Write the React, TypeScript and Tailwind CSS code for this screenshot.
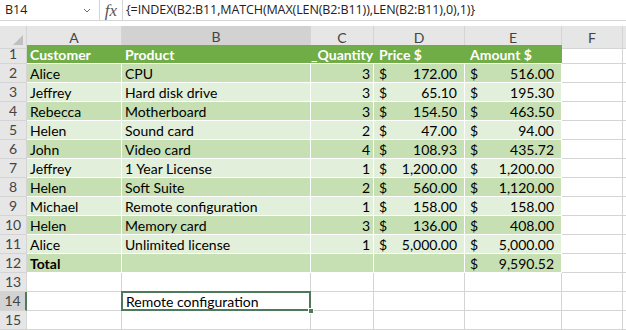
import React from "react";

type Row = {
  n: number;
  a?: string;
  b?: string;
  c?: string;
  d?: string;
  e?: string;
};

const rows: Row[] = [
  { n: 2, a: "Alice", b: "CPU", c: "3", d: "172.00", e: "516.00" },
  { n: 3, a: "Jeffrey", b: "Hard disk drive", c: "3", d: "65.10", e: "195.30" },
  { n: 4, a: "Rebecca", b: "Motherboard", c: "3", d: "154.50", e: "463.50" },
  { n: 5, a: "Helen", b: "Sound card", c: "2", d: "47.00", e: "94.00" },
  { n: 6, a: "John", b: "Video card", c: "4", d: "108.93", e: "435.72" },
  { n: 7, a: "Jeffrey", b: "1 Year License", c: "1", d: "1,200.00", e: "1,200.00" },
  { n: 8, a: "Helen", b: "Soft Suite", c: "2", d: "560.00", e: "1,120.00" },
  { n: 9, a: "Michael", b: "Remote configuration", c: "1", d: "158.00", e: "158.00" },
  { n: 10, a: "Helen", b: "Memory card", c: "3", d: "136.00", e: "408.00" },
  { n: 11, a: "Alice", b: "Unlimited license", c: "1", d: "5,000.00", e: "5,000.00" },
];

const cols = ["A", "B", "C", "D", "E", "F"];
const grid = "grid grid-cols-[27px_95px_189px_63px_91px_97px_61px_1fr]";
const font = { fontFamily: "Lato, 'Open Sans', sans-serif" };

function RowHead({ n, sel }: { n: number; sel?: boolean }) {
  return (
    <div
      className={
        "h-[19px] flex items-center justify-center border-r border-b border-[#d4d4d4] text-[14px] text-[#444] leading-none " +
        (sel ? "bg-[#d2d2d2] border-r-2 border-r-[#4e7a5b]" : "bg-[#e6e6e6]")
      }
    >
      {n}
    </div>
  );
}

function Money({ v, bg }: { v?: string; bg: string }) {
  return (
    <div className={"h-[19px] flex items-center justify-between px-[5px] pr-[7px] border-r border-b border-white " + bg}>
      <span>{v ? "$" : ""}</span>
      <span>{v}</span>
    </div>
  );
}

export default function App() {
  return (
    <div className="w-[626px] h-[330px] overflow-hidden bg-white text-black" style={font}>
      {/* formula bar */}
      <div className="h-[21px] flex border-b border-[#d4d4d4]" style={{ fontFamily: "'Open Sans', sans-serif" }}>
        <div className="w-[100px] flex items-center justify-between pl-[5px] pr-[8px] border-r border-[#d4d4d4] text-[12.5px] text-[#222]">
          <span>B14</span>
          <svg width="8" height="5" viewBox="0 0 8 5">
            <path d="M1 1 L4 4 L7 1" stroke="#666" strokeWidth="1" fill="none" />
          </svg>
        </div>
        <div className="w-[23px] flex items-center justify-center border-r border-[#d4d4d4] text-[17px] italic text-[#555] leading-none" style={{ fontFamily: "'Liberation Serif', serif" }}>
          fx
        </div>
        <div className="flex-1 flex items-center pl-[3px] text-[12.5px] text-[#222] tracking-[-0.1px]">
          {"{=INDEX(B2:B11,MATCH(MAX(LEN(B2:B11)),LEN(B2:B11),0),1)}"}
        </div>
      </div>
      <div className="h-[5px] bg-white" />

      {/* column headers */}
      <div className={grid + " h-[19px]"}>
        <div className="relative bg-[#e6e6e6] border-r border-b border-[#d4d4d4]">
          <svg className="absolute right-[3px] bottom-[3px]" width="10" height="10" viewBox="0 0 10 10">
            <path d="M10 0 L10 10 L0 10 Z" fill="#c0c0c0" />
          </svg>
        </div>
        {cols.map((c) => (
          <div
            key={c}
            className={
              "flex items-center justify-center text-[14px] text-[#444] border-r border-[#d4d4d4] " +
              (c === "B" ? "bg-[#d2d2d2] border-b-2 border-b-[#4e7a5b]" : "bg-[#e6e6e6] border-b")
            }
          >
            {c}
          </div>
        ))}
        <div className="bg-[#e6e6e6] border-b border-[#d4d4d4]" />
      </div>

      {/* row 1 header */}
      <div className={grid + " text-[14px]"}>
        <RowHead n={1} />
        <div className="col-span-5 h-[19px] flex items-center bg-[#70ad47] text-white font-bold border-b border-white">
          <span className="w-[95px] pl-[3px]">Customer</span>
          <span className="w-[189px] pl-[3px]">Product</span>
          <span className="w-[63px] text-right pr-[3px]">_Quantity</span>
          <span className="w-[91px] pl-[5px]">Price $</span>
          <span className="w-[97px] pl-[5px]">Amount $</span>
        </div>
        <div className="h-[19px] border-r border-b border-[#d4d4d4]" />
        <div className="h-[19px] border-b border-[#d4d4d4]" />

        {rows.map((r, i) => {
          const bg = i % 2 === 0 ? "bg-[#c6e0b4]" : "bg-[#e2efda]";
          return (
            <React.Fragment key={r.n}>
              <RowHead n={r.n} />
              <div className={"h-[19px] flex items-center pl-[3px] border-r border-b border-white " + bg}>{r.a}</div>
              <div className={"h-[19px] flex items-center pl-[3px] border-r border-b border-white " + bg}>{r.b}</div>
              <div className={"h-[19px] flex items-center justify-end pr-[3px] border-r border-b border-white " + bg}>{r.c}</div>
              <Money v={r.d} bg={bg} />
              <Money v={r.e} bg={bg} />
              <div className="h-[19px] border-r border-b border-[#d4d4d4]" />
              <div className="h-[19px] border-b border-[#d4d4d4]" />
            </React.Fragment>
          );
        })}

        {/* total */}
        <RowHead n={12} />
        <div className="h-[19px] flex items-center pl-[3px] font-bold bg-[#c6e0b4] border-r border-b border-white">Total</div>
        <div className="h-[19px] bg-[#c6e0b4] border-r border-b border-white" />
        <div className="h-[19px] bg-[#c6e0b4] border-r border-b border-white" />
        <div className="h-[19px] bg-[#c6e0b4] border-r border-b border-white" />
        <Money v="9,590.52" bg="bg-[#c6e0b4]" />
        <div className="h-[19px] border-r border-b border-[#d4d4d4]" />
        <div className="h-[19px] border-b border-[#d4d4d4]" />

        {[13, 14, 15].map((n) => (
          <React.Fragment key={n}>
            <RowHead n={n} sel={n === 14} />
            <div className="h-[19px] border-r border-b border-[#d4d4d4]" />
            {n === 14 ? (
              <div className="relative h-[19px] border-r border-b border-[#d4d4d4]">
                <div className="absolute -left-[1px] -top-[1px] -right-[1px] -bottom-[1px] border-2 border-[#4e7a5b] flex items-center pl-[3px]">
                  Remote configuration
                </div>
                <div className="absolute -right-[4px] -bottom-[4px] w-[6px] h-[6px] bg-[#4e7a5b] border border-white" />
              </div>
            ) : (
              <div className="h-[19px] border-r border-b border-[#d4d4d4]" />
            )}
            <div className="h-[19px] border-r border-b border-[#d4d4d4]" />
            <div className="h-[19px] border-r border-b border-[#d4d4d4]" />
            <div className="h-[19px] border-r border-b border-[#d4d4d4]" />
            <div className="h-[19px] border-r border-b border-[#d4d4d4]" />
            <div className="h-[19px] border-b border-[#d4d4d4]" />
          </React.Fragment>
        ))}
      </div>
    </div>
  );
}
